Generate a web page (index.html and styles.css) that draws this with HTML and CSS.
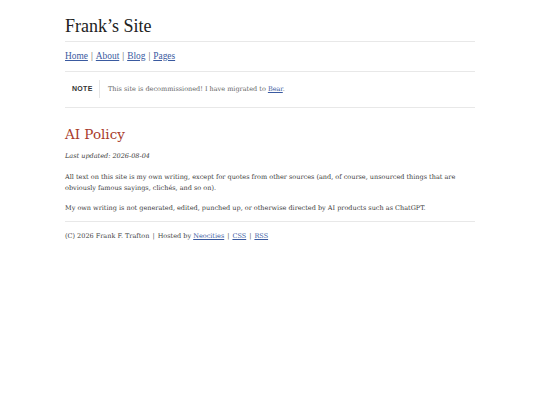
FILE: index.html
```html
<!DOCTYPE html>
<html>
<head>
<meta charset="utf-8">
<title>AI Policy</title>
<link rel="stylesheet" href="styles.css">
</head>
<body>
<div class="page">
  <header class="site-header">
    <div class="site-title">Frank’s Site</div>
  </header>
  <nav class="nav">
    <a href="#">Home</a><span class="sep">|</span><a href="#">About</a><span class="sep">|</span><a href="#">Blog</a><span class="sep">|</span><a href="#">Pages</a>
  </nav>
  <div class="note">
    <div class="note-label">NOTE</div>
    <div class="note-text">This site is decommissioned! I have migrated to <a href="#">Bear</a>.</div>
  </div>
  <main class="content">
    <h1 class="post-title">AI Policy</h1>
    <p class="updated">Last updated: 2026-08-04</p>
    <p>All text on this site is my own writing, except for quotes from other sources (and, of course, unsourced things that are obviously famous sayings, clichés, and so on).</p>
    <p>My own writing is not generated, edited, punched up, or otherwise directed by AI products such as ChatGPT.</p>
  </main>
  <footer class="footer">
    (C) 2026 Frank F. Trafton<span class="sep">|</span>Hosted by <a href="#">Neocities</a><span class="sep">|</span><a href="#">CSS</a><span class="sep">|</span><a href="#">RSS</a>
  </footer>
</div>
</body>
</html>
```
FILE: styles.css
```css
html, body {
  margin: 0;
  padding: 0;
  background: #fff;
}
body {
  font-family: "DejaVu Serif", serif;
  color: #3a3a3a;
}
.page {
  width: 410px;
  margin: 0 auto;
  padding-top: 16px;
}
a {
  color: #3a5aa0;
}
.site-header {
  border-bottom: 1px solid #e8e8e8;
  padding-bottom: 5px;
}
.site-title {
  font-family: "Liberation Serif", serif;
  font-size: 18px;
  line-height: 20px;
  color: #222;
}
.nav {
  font-family: "Liberation Serif", serif;
  font-size: 9.4px;
  line-height: 12px;
  padding: 8px 0 9px;
  border-bottom: 1px solid #e8e8e8;
  color: #444;
}
.nav .sep {
  margin: 0 3px;
  color: #555;
}
.note {
  display: flex;
  align-items: center;
  padding: 8px 0 9px 7px;
  border-bottom: 1px solid #e8e8e8;
}
.note-label {
  font-family: "Liberation Sans", sans-serif;
  font-weight: bold;
  font-size: 7px;
  letter-spacing: 0.3px;
  color: #333;
  padding-right: 8px;
  border-right: 1px solid #e6e6e6;
  line-height: 18px;
  width: 19px;
}
.note-text {
  padding-left: 8px;
  font-size: 6.5px;
  color: #666;
}
.post-title {
  font-family: "DejaVu Serif", serif;
  font-weight: normal;
  font-size: 13.5px;
  color: #a83b2b;
  margin: 17px 0 8px;
  line-height: 18px;
}
.content p {
  font-size: 6.5px;
  line-height: 11px;
  margin: 0 0 9px;
}
.content p:last-child {
  margin-bottom: 7px;
}
.content p.updated {
  font-style: italic;
  margin-bottom: 10px;
}
.footer {
  border-top: 1px solid #e8e8e8;
  padding-top: 9px;
  font-size: 6.5px;
  line-height: 11px;
  color: #444;
}
.footer .sep {
  margin: 0 3px;
  color: #555;
}
```
